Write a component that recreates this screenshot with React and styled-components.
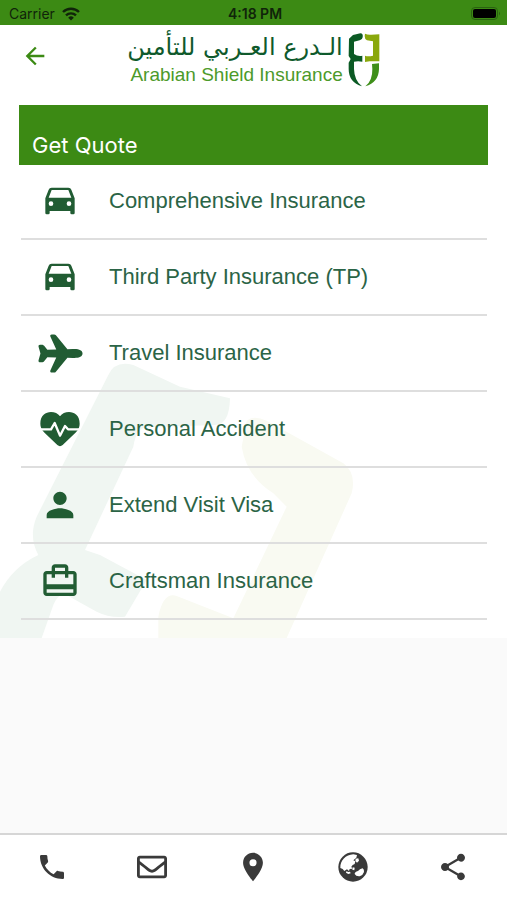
import React from 'react';
import styled, {createGlobalStyle} from 'styled-components';
import {MdArrowBack, MdPerson, MdCardTravel, MdPhone, MdLocationOn, MdShare} from 'react-icons/md';
import {IoAirplane} from 'react-icons/io5';
import {FaRegEnvelope} from 'react-icons/fa';


const GlobalStyle = createGlobalStyle`
    * {
        box-sizing: border-box;
    }
    body {
        margin: 0;
        background: #fafafa;
        font-family: "Liberation Sans", Arial, sans-serif;
    }
`
const Screen = styled.div`
    display: flex;
    flex-direction: column;
    min-height: 100vh;
`
const StatusBar = styled.div`
    display: grid;
    grid-template-columns: 1fr auto 1fr;
    align-items: center;
    height: 25px;
    padding: 2px 6px 0 9px;
    background: #3c8a14;
    color: #10240a;
    font-family: Inter, sans-serif;
    font-size: 14px;
`
const Carrier = styled.div`
    display: flex;
    align-items: center;
    gap: 7px;
`
const Clock = styled.div`
    font-weight: 600;
`
const Battery = styled.svg`
    justify-self: end;
`
const Content = styled.main`
    position: relative;
    padding-bottom: 18px;
    background: #fff;
`
const Header = styled.header`
    display: grid;
    grid-template-columns: 1fr auto 1fr;
    align-items: start;
    height: 80px;
    padding: 6px 21px 0;
`
const Back = styled.a`
    display: flex;
    margin-top: 11px;
    color: #3c8a14;
`
const Brand = styled.div`
    display: flex;
    align-items: flex-end;
    gap: 5px;
`
const BrandText = styled.div`
    text-align: right;
`
const BrandArabic = styled.div`
    color: #0f5a2c;
    font-family: "DejaVu Sans", sans-serif;
    font-size: 24px;
    line-height: 32px;
`
const BrandEnglish = styled.div`
    color: #4c9a2a;
    font-size: 19px;
    line-height: 24px;
`
const Watermark = styled.svg`
    position: absolute;
    left: 0;
    bottom: 0;
`
const Panel = styled.section`
    position: relative;
    margin: 0 19px;
`
const Title = styled.h1`
    display: flex;
    align-items: flex-end;
    height: 60px;
    margin: 0;
    padding: 0 13px 7px;
    background: #3c8a14;
    color: #fff;
    font-family: Inter, sans-serif;
    font-size: 22px;
    font-weight: 400;
    line-height: 26px;
`
const List = styled.ul`
    margin: -1px 1px 0 2px;
    padding: 0;
    list-style: none;
`
const Row = styled.li`
    border-bottom: 2px solid #dedede;
`
const RowLink = styled.a`
    display: flex;
    align-items: center;
    gap: 10px;
    height: 74px;
    color: #2b6446;
    font-size: 22px;
    text-decoration: none;
`
const RowIcon = styled.span`
    display: flex;
    justify-content: center;
    width: 78px;
    color: #215c33;
`
const TabBar = styled.nav`
    display: flex;
    height: 67px;
    margin-top: auto;
    padding: 0 4px 2px 2px;
    border-top: 2px solid #d6d6d6;
    background: #fff;
`
const Tab = styled.a`
    display: flex;
    flex: 1;
    align-items: center;
    justify-content: center;
    color: #3a3a3a;
`

const WifiIcon = () => (
    <svg width="18" height="14" viewBox="0 0 18 14" fill="none" stroke="currentColor" strokeWidth="2.4">
        <path d="M1 5a11.4 11.4 0 0 1 16 0" />
        <path d="M4 8.400a7.200 7.200 0 0 1 10 0" />
        <path d="M9 13.500L6.200 10.700a4 4 0 0 1 5.600 0z" fill="currentColor" stroke="none" />
    </svg>
)

const ShieldLogo = () => (
    <svg width="32" height="54" viewBox="286 97 94 162">
        <path fill="#0b5a24" d="M288 114L300 103L322 98Q331 98 329 110Q328 118 320 119L303 123V160Q315 168 328 165V183Q315 181 303 183V205Q304 240 327 257Q287 245 287 205V186L293 175L287 166Z" />
        <path fill="#8aa80c" d="M336 99Q344 103 355 102L379 101V182H350L336 184V165Q345 169 360 165V122L342 119Q335 116 335 106Z" />
        <path fill="#3f8f1a" d="M357 190L378 188V205Q377 245 337 257Q359 240 358 205Z" />
    </svg>
)

const CarIcon = () => (
    <svg width="30" height="28" viewBox="0 0 90 84">
        <path fill="currentColor" fillRule="evenodd" d="M20 2H70Q77 2 79 8L89 34V78Q89 82 85 82H80Q76 82 76 78V72H14V78Q14 82 10 82H5Q1 82 1 78V34L11 8Q13 2 20 2ZM20 9L11 32H79L70 9ZM18 43A7 7 0 1 0 18 57A7 7 0 1 0 18 43ZM72 43A7 7 0 1 0 72 57A7 7 0 1 0 72 43Z" />
    </svg>
)

const HeartPulseIcon = () => (
    <svg width="40" height="36" viewBox="0 0 120 108">
        <path fill="currentColor" d="M60 16C46 -4 1 -3 1 38Q1 52 12 64L52 102Q60 109 68 102L108 64Q119 52 119 38C119 -3 74 -4 60 16Z" />
        <path fill="none" stroke="#fff" strokeWidth="7" strokeLinejoin="round" d="M0 55H33L44 36L60 74L75 45L84 55H120" />
    </svg>
)

const GlobeIcon = () => (
    <svg width="30" height="30" viewBox="0 0 90 90">
        <circle cx="45" cy="45" r="44" fill="currentColor" />
        <g fill="#fff">
            <path d="M7 48C6 26 23 8 46 7L57 9L55 17L46 25L52 28L50 36L44 39L40 44L43 50L35 51L33 57L27 52L19 57L14 51Z" />
            <path d="M53 20L61 19L63 26L57 32L52 27Z" />
            <path d="M44 46L50 47L49 55L43 53Z" />
            <path d="M25 58L31 60L36 59L38 64L31 66L24 62Z" />
            <path d="M50 66Q50 60 60 57L66 52L74 49Q79 52 78 60Q75 70 65 73Q54 74 50 66Z" />
        </g>
    </svg>
)

const services = [
    {name: 'Comprehensive Insurance', icon: <CarIcon />},
    {name: 'Third Party Insurance (TP)', icon: <CarIcon />},
    {name: 'Travel Insurance', icon: <IoAirplane size={47} />},
    {name: 'Personal Accident', icon: <HeartPulseIcon />},
    {name: 'Extend Visit Visa', icon: <MdPerson size={40} />},
    {name: 'Craftsman Insurance', icon: <MdCardTravel size={40} />},
]

const tabs = [
    {name: 'Call', icon: <MdPhone size={32} />},
    {name: 'Mail', icon: <FaRegEnvelope size={30} />},
    {name: 'Branches', icon: <MdLocationOn size={34} />},
    {name: 'Website', icon: <GlobeIcon />},
    {name: 'Share', icon: <MdShare size={32} />},
]

const App = () => {
    return (
        <Screen>
            <GlobalStyle />
            <StatusBar>
                <Carrier>Carrier <WifiIcon /></Carrier>
                <Clock>4:18 PM</Clock>
                <Battery width="30" height="14" viewBox="0 0 30 14">
                    <rect x="0.500" y="0.500" width="26" height="12" rx="3.500" fill="none" stroke="#2a6310" />
                    <rect x="2" y="2" width="23" height="9" rx="2" fill="#000" />
                    <path d="M28 4.500Q30 6.500 28 8.500z" fill="#2a6310" />
                </Battery>
            </StatusBar>
            <Content>
                <Watermark width="380" height="288" viewBox="0 0 1140 864">
                    <path fill="#f0f6f2" d="M325 75Q345 30 400 45L540 110L690 145Q688 225 645 225L440 232Q408 235 400 290L255 600L300 615L440 690L375 800Q330 805 290 785L190 730Q170 740 160 765L125 864H0V725Q40 650 115 615Q85 560 110 500Z" />
                    <path fill="#f9faf2" d="M740 212Q760 195 800 212L1030 340Q1070 370 1055 430L860 864H475V800Q490 725 530 738L700 805L860 470L820 430Q740 380 725 290Z" />
                </Watermark>
                <Header>
                    <Back href="#back" aria-label="Back"><MdArrowBack size={28} /></Back>
                    <Brand>
                        <BrandText>
                            <BrandArabic lang="ar" dir="rtl">الـدرع العـربي للتأمين</BrandArabic>
                            <BrandEnglish>Arabian Shield Insurance</BrandEnglish>
                        </BrandText>
                        <ShieldLogo />
                    </Brand>
                </Header>
                <Panel>
                    <Title>Get Quote</Title>
                    <List>
                        {services.map((item) => (
                            <Row key={item.name}>
                                <RowLink href="#quote">
                                    <RowIcon>{item.icon}</RowIcon>
                                    {item.name}
                                </RowLink>
                            </Row>
                        ))}
                    </List>
                </Panel>
            </Content>
            <TabBar>
                {tabs.map((tab) => (
                    <Tab key={tab.name} href="#tab" aria-label={tab.name}>{tab.icon}</Tab>
                ))}
            </TabBar>
        </Screen>
    )
}

export default App
